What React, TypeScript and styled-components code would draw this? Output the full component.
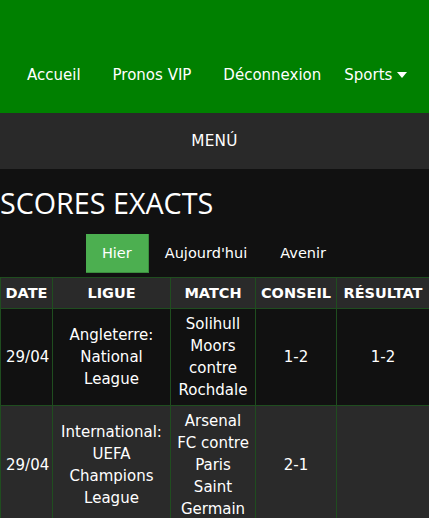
import React, { useState } from "react";
import styled, { createGlobalStyle } from "styled-components";

const GlobalStyle = createGlobalStyle`
  html, body {
    margin: 0;
    padding: 0;
    background: #111111;
    color: #ffffff;
    font-family: "DejaVu Sans", Verdana, sans-serif;
  }
`;

const Header = styled.header`
  background: #008000;
  height: 113px;
  box-sizing: border-box;
  padding-top: 55px;
`;

const Nav = styled.nav`
  display: flex;
  align-items: center;
  height: 40px;
  padding-left: 11px;
`;

const NavLink = styled.a<{ $tight?: boolean }>`
  display: flex;
  align-items: center;
  gap: 5px;
  padding: 0 ${(p) => (p.$tight ? "7px" : "16px")};
  color: #ffffff;
  font-size: 15px;
  text-decoration: none;
  white-space: nowrap;
  cursor: pointer;
`;

const MenuBar = styled.div`
  background: #292929;
  height: 56px;
  display: flex;
  align-items: center;
  justify-content: center;
  font-size: 15.3px;
  letter-spacing: 0.2px;
`;

const Title = styled.h1`
  margin: 0;
  padding-top: 16px;
  font-family: "Open Sans", "Noto Sans", sans-serif;
  font-weight: 400;
  font-size: 28.7px;
  line-height: 36px;
`;

const Tabs = styled.div`
  display: flex;
  justify-content: center;
  margin-top: 13px;
  margin-bottom: 4px;
`;

const Tab = styled.button<{ $active: boolean }>`
  height: 39px;
  padding: 0 16px;
  border: none;
  border-bottom: 1px solid ${(p) => (p.$active ? "#3b8f3e" : "transparent")};
  border-right: 1px solid ${(p) => (p.$active ? "#3b8f3e" : "transparent")};
  background: ${(p) => (p.$active ? "#4caf50" : "transparent")};
  color: #ffffff;
  font-family: "DejaVu Sans", Verdana, sans-serif;
  font-size: 14.5px;
  cursor: pointer;
`;

const Table = styled.table`
  width: 100%;
  table-layout: fixed;
  border-collapse: collapse;
  font-size: 15px;
  line-height: 22px;
`;

const Col = styled.col<{ $w: number }>`
  width: ${(p) => p.$w}px;
`;

const Th = styled.th`
  padding: 4px 0;
  background: #2a2a2a;
  border: 1px solid #1f4d1f;
  font-weight: bold;
  font-size: 14.5px;
  text-align: center;
  white-space: nowrap;
  overflow: visible;
`;

const Row = styled.tr<{ $alt: boolean }>`
  background: ${(p) => (p.$alt ? "#2a2a2a" : "#111111")};
`;

const Td = styled.td`
  padding: 4px 5px;
  border: 1px solid #1f4d1f;
  text-align: center;
  vertical-align: middle;
`;

const Caret = () => (
  <svg width="10" height="6" viewBox="0 0 10 6">
    <path d="M0 0h10L5 6z" fill="#ffffff" />
  </svg>
);

const columns = [
  { label: "DATE", w: 52 },
  { label: "LIGUE", w: 118 },
  { label: "MATCH", w: 85 },
  { label: "CONSEIL", w: 81 },
  { label: "RÉSULTAT", w: 93 },
];

const rows = [
  {
    date: "29/04",
    league: "Angleterre: National League",
    match: "Solihull Moors contre Rochdale",
    tip: "1-2",
    result: "1-2",
  },
  {
    date: "29/04",
    league: "International: UEFA Champions League",
    match: "Arsenal FC contre Paris Saint Germain",
    tip: "2-1",
    result: "",
  },
];

const tabs = ["Hier", "Aujourd'hui", "Avenir"];

export default function App() {
  const [tab, setTab] = useState("Hier");

  return (
    <>
      <GlobalStyle />
      <Header>
        <Nav>
          <NavLink>Accueil</NavLink>
          <NavLink>Pronos VIP</NavLink>
          <NavLink>Déconnexion</NavLink>
          <NavLink $tight>
            Sports <Caret />
          </NavLink>
        </Nav>
      </Header>
      <MenuBar>MENÚ</MenuBar>
      <Title>SCORES EXACTS</Title>
      <Tabs>
        {tabs.map((t) => (
          <Tab key={t} $active={tab === t} onClick={() => setTab(t)}>
            {t}
          </Tab>
        ))}
      </Tabs>
      <Table>
        <colgroup>
          {columns.map((c) => (
            <Col key={c.label} $w={c.w} />
          ))}
        </colgroup>
        <thead>
          <tr>
            {columns.map((c) => (
              <Th key={c.label}>{c.label}</Th>
            ))}
          </tr>
        </thead>
        <tbody>
          {rows.map((r, i) => (
            <Row key={i} $alt={i % 2 === 1}>
              <Td>{r.date}</Td>
              <Td>{r.league}</Td>
              <Td>{r.match}</Td>
              <Td>{r.tip}</Td>
              <Td>{r.result}</Td>
            </Row>
          ))}
        </tbody>
      </Table>
    </>
  );
}
